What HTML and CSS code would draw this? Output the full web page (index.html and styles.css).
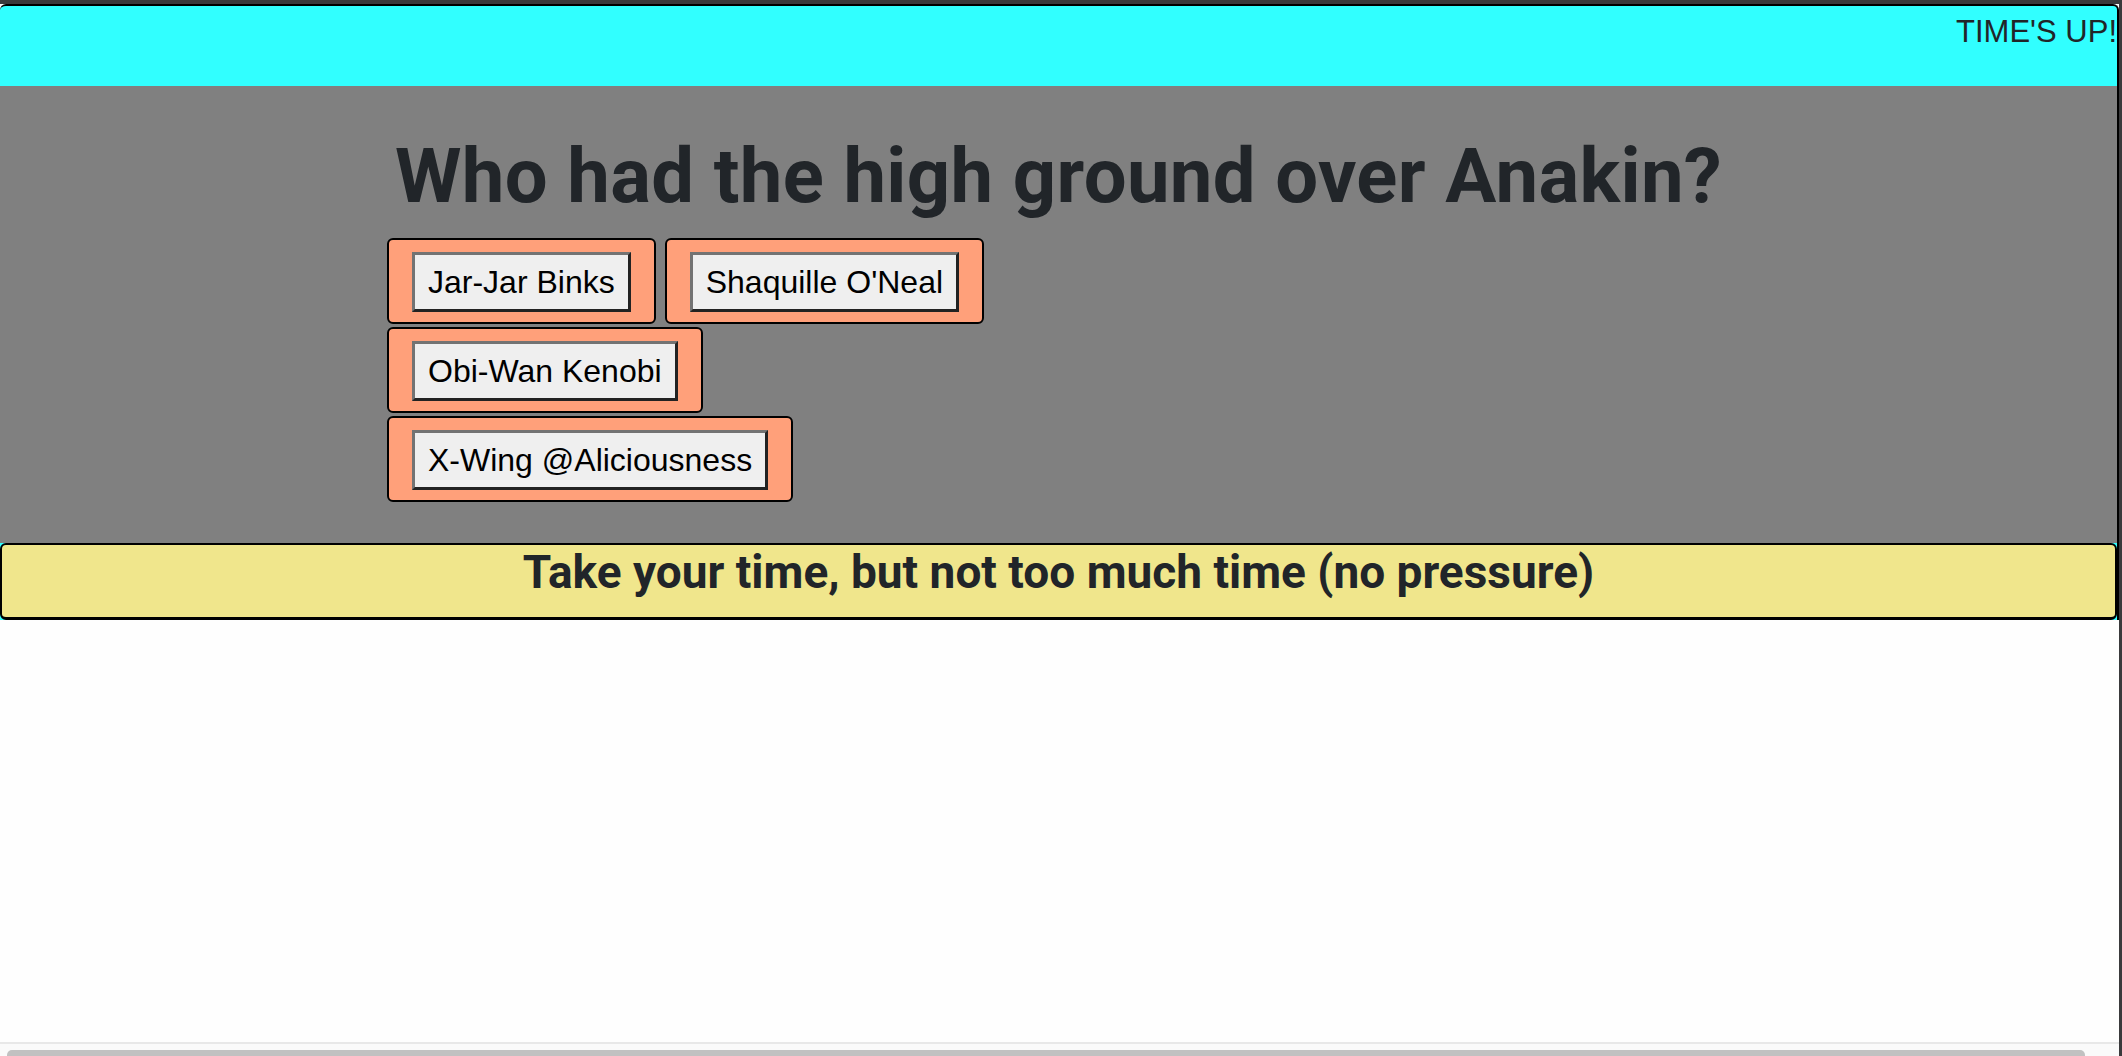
FILE: index.html
```html
<!DOCTYPE html>
<html lang="en">
<head>
<meta charset="utf-8">
<title>Quiz</title>
<link rel="stylesheet" href="styles.css">
</head>
<body>
<div class="window">
  <div class="viewport">
    <div class="app">
      <header class="topbar">
        <span class="timer">TIME'S UP!</span>
      </header>
      <main class="stage">
        <h1 class="question">Who had the high ground over Anakin?</h1>
        <div class="answers">
          <div class="row">
            <div class="choice"><button class="answer">Jar-Jar Binks</button></div>
            <div class="choice"><button class="answer">Shaquille O'Neal</button></div>
          </div>
          <div class="row">
            <div class="choice"><button class="answer">Obi-Wan Kenobi</button></div>
          </div>
          <div class="row">
            <div class="choice"><button class="answer">X-Wing @Aliciousness</button></div>
          </div>
        </div>
      </main>
      <footer class="notice">
        <p class="notice-text">Take your time, but not too much time (no pressure)</p>
      </footer>
    </div>
  </div>
  <div class="hscroll"><div class="thumb"></div></div>
</div>
</body>
</html>
```

FILE: styles.css
```css
html, body {
  margin: 0;
  padding: 0;
  background: #ffffff;
}

.window {
  height: 100vh;
  box-sizing: border-box;
  display: flex;
  flex-direction: column;
  border-top: 4px solid #3a3a3c;
  border-right: 3px solid #3a3a3c;
}

.viewport {
  flex: 1;
  background: #fefefe;
  overflow: hidden;
}

.app {
  background: #31ffff;
  border-top: 2px solid #000;
  border-right: 2px solid #000;
  border-radius: 6px 6px 0 0;
}

.topbar {
  height: 80px;
  box-sizing: border-box;
  padding-top: 8px;
  display: flex;
  justify-content: flex-end;
}

.timer {
  font-family: "Liberation Sans", Arial, sans-serif;
  font-size: 31px;
  line-height: 36px;
  color: #212529;
}

.stage {
  background: #808080;
  padding: 52px 0 41px 387px;
}

.question {
  margin: 0 0 24px 0;
  padding-left: 8px;
  font-family: Roboto, "Liberation Sans", sans-serif;
  font-weight: 700;
  font-size: 76px;
  line-height: 76px;
  letter-spacing: 0.37px;
  color: #212529;
}

.answers {
  display: flex;
  flex-direction: column;
  gap: 3px;
}

.row {
  display: flex;
  gap: 9px;
}

.choice {
  background: #ffa07a;
  border: 2px solid #000;
  border-radius: 6px;
  padding: 12px 23px 10px 23px;
}

.answer {
  display: block;
  margin: 0;
  font-family: "Liberation Sans", Arial, sans-serif;
  font-size: 32px;
  line-height: 36px;
  padding: 9px 13px;
  color: #000;
  background: #efefef;
  border-style: solid;
  border-width: 3px;
  border-color: #737373 #222222 #222222 #737373;
  border-radius: 0;
}

.notice {
  background: #f0e68c;
  border: 2px solid #000;
  border-bottom-width: 3px;
  border-radius: 6px;
  height: 72px;
  box-sizing: content-box;
}

.notice-text {
  margin: 0;
  padding-top: 4px;
  text-align: center;
  font-family: Roboto, "Liberation Sans", sans-serif;
  font-weight: 700;
  font-size: 46px;
  line-height: 46px;
  color: #212529;
}

.hscroll {
  height: 14px;
  box-sizing: border-box;
  background: #fafafa;
  border-top: 2px solid #e8e8e8;
  padding: 6px 34px 0 7px;
  overflow: hidden;
}

.thumb {
  height: 10px;
  background: #c1c1c1;
  border-radius: 5px;
}
```
